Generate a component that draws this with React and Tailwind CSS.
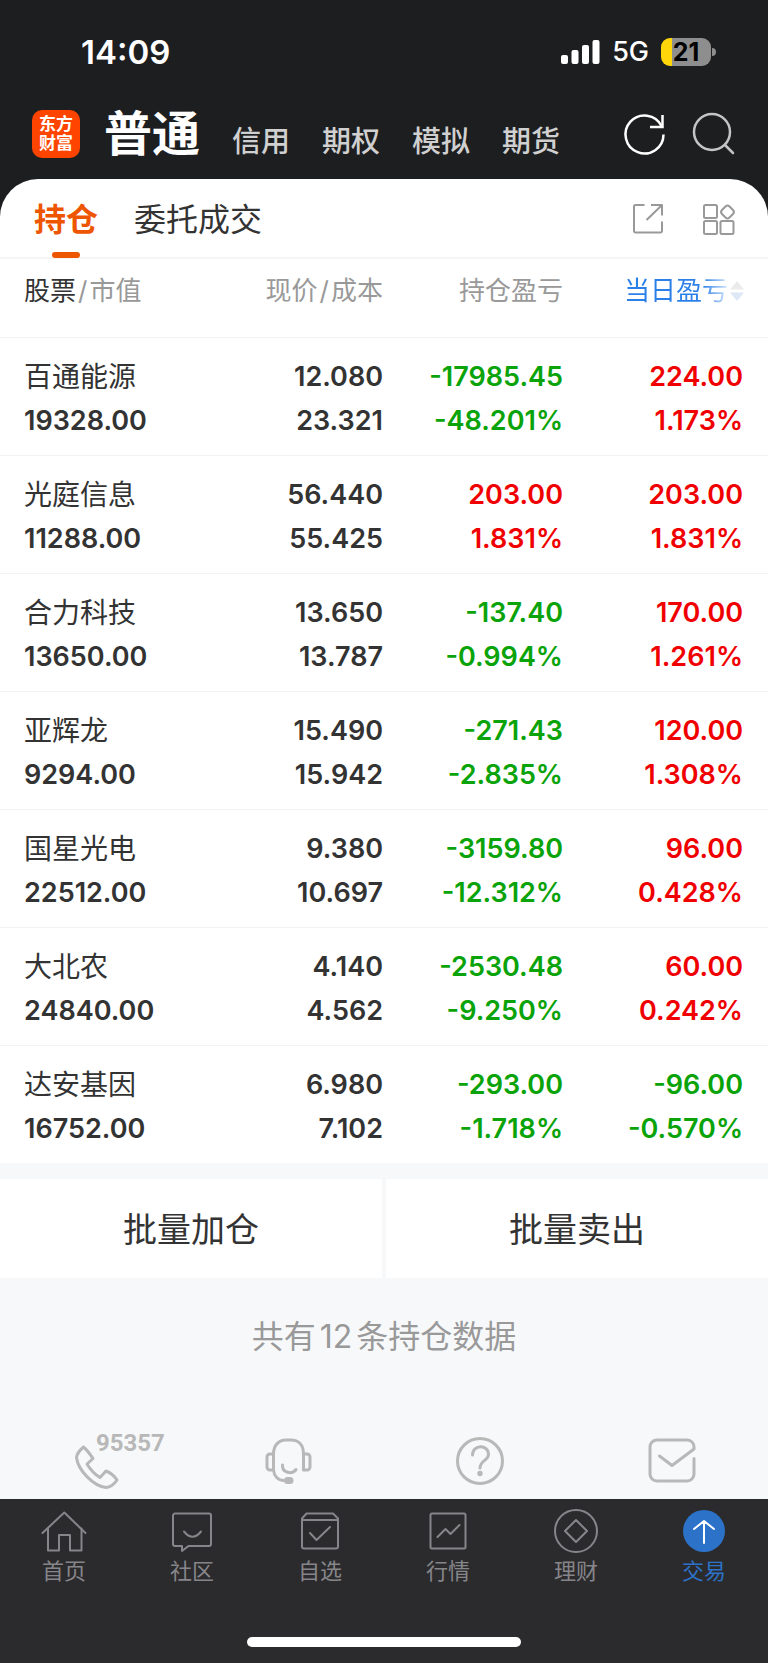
import React from 'react';

const accounts = ['信用', '期权', '模拟', '期货'];

const holdings = [
  { name: '百通能源', value: '19328.00', price: '12.080', cost: '23.321', total: ['-17985.45', '-48.201%'], today: ['224.00', '1.173%'] },
  { name: '光庭信息', value: '11288.00', price: '56.440', cost: '55.425', total: ['203.00', '1.831%'], today: ['203.00', '1.831%'] },
  { name: '合力科技', value: '13650.00', price: '13.650', cost: '13.787', total: ['-137.40', '-0.994%'], today: ['170.00', '1.261%'] },
  { name: '亚辉龙', value: '9294.00', price: '15.490', cost: '15.942', total: ['-271.43', '-2.835%'], today: ['120.00', '1.308%'] },
  { name: '国星光电', value: '22512.00', price: '9.380', cost: '10.697', total: ['-3159.80', '-12.312%'], today: ['96.00', '0.428%'] },
  { name: '大北农', value: '24840.00', price: '4.140', cost: '4.562', total: ['-2530.48', '-9.250%'], today: ['60.00', '0.242%'] },
  { name: '达安基因', value: '16752.00', price: '6.980', cost: '7.102', total: ['-293.00', '-1.718%'], today: ['-96.00', '-0.570%'] },
];

const Icon = ({ size = 44, width = 2, className = '', children }) => (
  <svg
    width={size}
    height={size}
    viewBox={`0 0 ${size} ${size}`}
    fill="none"
    stroke="currentColor"
    strokeWidth={width}
    strokeLinecap="round"
    strokeLinejoin="round"
    aria-hidden="true"
    className={`shrink-0 overflow-visible ${className}`}
  >
    {children}
  </svg>
);

const navItems = [
  {
    label: '首页',
    icon: (
      <>
        <path d="M.5 24 22.3 3.5 43.5 24" />
        <path d="M6 19.5v22h11V26h11v15.5h11.5v-22" />
      </>
    ),
  },
  {
    label: '社区',
    icon: (
      <>
        <path d="M5 4.5h34a2 2 0 0 1 2 2V35a2 2 0 0 1-2 2H18.5l-6.5 5V37H5a2 2 0 0 1-2-2V6.5a2 2 0 0 1 2-2z" />
        <path d="M14 22.5Q22.5 33 31 22.5" />
      </>
    ),
  },
  {
    label: '自选',
    icon: (
      <>
        <path d="M4 9.5 8.5 4.5H35l5 5V37.5a2 2 0 0 1-2 2H6a2 2 0 0 1-2-2z" />
        <path d="M4 11h36M12 24l6.5 7L32 18" />
      </>
    ),
  },
  {
    label: '行情',
    icon: (
      <>
        <rect x="4.5" y="4.5" width="35" height="35" rx="1.5" />
        <path d="m11.5 28 8-8 5 5 9-9" />
      </>
    ),
  },
  {
    label: '理财',
    icon: (
      <>
        <circle cx="22" cy="22" r="21" />
        <path d="m22 11 11 11-11 11-11-11z" />
      </>
    ),
  },
  {
    label: '交易',
    active: true,
    icon: (
      <>
        <circle cx="22" cy="22" r="21" fill="#2b72c8" stroke="none" />
        <path d="M22 34V12M12 20l10-8 10 8" stroke="#fff" />
      </>
    ),
  },
];

const StatusBar = () => (
  <div className="flex items-center justify-between pt-8 pr-[52px] pl-[81px] text-white">
    <span className="text-[33px] leading-[40px] font-semibold">14:09</span>
    <div className="flex items-center">
      <svg width="40" height="24" viewBox="0 0 40 24" fill="#fff" aria-hidden="true">
        <rect x="0" y="15" width="7" height="9" rx="2" />
        <rect x="10.5" y="10" width="7" height="14" rx="2" />
        <rect x="21" y="5" width="7" height="19" rx="2" />
        <rect x="31.5" y="0" width="7" height="24" rx="2" />
      </svg>
      <span className="ml-[11px] text-[27px] leading-8 font-medium">5G</span>
      <div className="ml-3 flex items-center gap-px">
        <div className="flex h-7 w-[50px] items-center justify-center rounded-[9px] bg-linear-to-r from-[#ffd60a] from-22% to-[#8e8e8e] to-22%">
          <span className="text-[25px] leading-7 font-bold text-black">21</span>
        </div>
        <div className="h-2 w-1 rounded-r-full bg-[#8e8e8e]" />
      </div>
    </div>
  </div>
);

const AccountBar = () => (
  <div className="flex items-center pt-[25px] pr-[33px] pb-2 pl-8">
    <div className="flex size-12 shrink-0 flex-col items-center justify-center rounded-[10px] bg-[#ff4400] text-[17px] leading-[19px] font-bold text-white">
      <span>东方</span>
      <span>财富</span>
    </div>
    <nav className="ml-6 flex items-end gap-8">
      <a href="#normal" className="text-[48px] leading-[74px] font-bold text-white">普通</a>
      {accounts.map((name) => (
        <a key={name} href="#account" className="text-[29px] leading-[58px] font-medium text-[#d0d0d0]">
          {name}
        </a>
      ))}
    </nav>
    <div className="ml-auto flex gap-6">
      <button type="button" aria-label="刷新" className="text-white">
        <Icon width={2.5} className="[stroke-linecap:butt] [stroke-linejoin:miter]">
          <path d="M40.5 22.5A19 19 0 1 1 38.5 14" />
          <path d="M27 15h12.5V3" />
        </Icon>
      </button>
      <button type="button" aria-label="搜索" className="text-[#c4c4c4]">
        <Icon width={2.5}>
          <circle cx="21" cy="20" r="18" />
          <path d="m34 33 8 8" />
        </Icon>
      </button>
    </div>
  </div>
);

const TabBar = () => (
  <div className="flex h-20 items-center border-b-2 border-[#f5f5f5] px-[34px]">
    <div className="flex h-full gap-9">
      <button type="button" className="relative pt-1 text-[32px] leading-10 font-bold text-[#ee5500]">
        持仓
        <span className="absolute -bottom-px left-1/2 h-1.5 w-7 -translate-x-1/2 rounded-sm bg-[#ee5500]" />
      </button>
      <button type="button" className="pt-1 text-[32px] leading-10 text-[#333]">委托成交</button>
    </div>
    <div className="ml-auto flex gap-[38px] pt-0.5 text-[#999]">
      <button type="button" aria-label="分享">
        <Icon size={32} className="[stroke-linecap:butt]">
          <path d="M12.5 2h-9A1.5 1.5 0 0 0 2 3.5V28a1.5 1.5 0 0 0 1.5 1.5h25A1.5 1.5 0 0 0 30 28v-9.5" />
          <path d="M19 2h11v10.5M14.5 17l15-14.5" />
        </Icon>
      </button>
      <button type="button" aria-label="更多功能">
        <Icon size={32}>
          <rect x="2" y="2" width="13" height="13" rx="1.5" />
          <rect x="2" y="18" width="13" height="13" rx="1.5" />
          <rect x="18.5" y="18" width="13" height="13" rx="1.5" />
          <path d="M23.5 3.5q2-2 4 0L31 7q2 2 0 4l-3.5 3.5q-2 2-4 0L20 11q-2-2 0-4z" />
        </Icon>
      </button>
    </div>
  </div>
);

const gainColor = (text) => (text.startsWith('-') ? 'text-[#0aa30a]' : 'text-[#f00000]');

const HoldingsTable = () => (
  <table className="w-full table-fixed border-separate border-spacing-0">
    <colgroup>
      <col />
      <col className="w-[168px]" />
      <col className="w-[180px]" />
      <col className="w-[205px]" />
    </colgroup>
    <thead>
      <tr className="h-[78px] align-top text-[26px] leading-8 text-[#999] *:pt-4 *:font-normal">
        <th scope="col" className="pl-6 text-left">
          <span className="text-[#333]">股票</span>
          <span className="mx-0.5">/</span>市值
        </th>
        <th scope="col" className="text-right whitespace-nowrap">
          现价<span className="mx-0.5">/</span>成本
        </th>
        <th scope="col" className="text-right">持仓盈亏</th>
        <th scope="col" className="pr-6">
          <button type="button" className="ml-auto flex items-center gap-0.5">
            <span className="bg-linear-to-r from-[#2a7fe8] from-75% to-[#2a7fe8]/20 bg-clip-text text-transparent">当日盈亏</span>
            <svg width="14" height="20" viewBox="0 0 14 20" aria-hidden="true">
              <path d="M7 0l7 8.5H0z" fill="#ebebeb" />
              <path d="M7 20l7-8.5H0z" fill="#dce8f6" />
            </svg>
          </button>
        </th>
      </tr>
    </thead>
    <tbody>
      {holdings.map((row) => (
        <tr key={row.name} className="h-[118px] text-right align-top text-[27px] leading-[44px] font-semibold text-[#333] *:border-t *:border-[#f3f3f3] *:pt-[17px]">
          <td className="pl-6 text-left">
            <div className="text-[28px] font-normal">{row.name}</div>
            <div>{row.value}</div>
          </td>
          <td>
            <div>{row.price}</div>
            <div>{row.cost}</div>
          </td>
          <td className={gainColor(row.total[0])}>
            <div>{row.total[0]}</div>
            <div>{row.total[1]}</div>
          </td>
          <td className={`pr-[25px] ${gainColor(row.today[0])}`}>
            <div>{row.today[0]}</div>
            <div>{row.today[1]}</div>
          </td>
        </tr>
      ))}
    </tbody>
  </table>
);

const HelpLinks = () => (
  <div className="grid grid-cols-4 justify-items-center pb-[14px] text-[#b8b8b8]">
    <a href="tel:95357" className="relative">
      <Icon size={48} width={3}>
        <path d="M11.5 10C8 13 5 16.5 4.5 20.5C6 33 21 49 34 50.5C39 50 43 46 45 43C42 38.5 38 35.5 34 34L28 40.5C22 37 18 32 15 27L21 21.5C18 17 15 13 11.5 10z" />
      </Icon>
      <span className="absolute -top-1.5 left-6 font-[Roboto] text-[24px] leading-6 font-bold">95357</span>
    </a>
    <a href="#service" aria-label="在线客服">
      <Icon size={48} width={3}>
        <path d="M9.5 32V17C9.5 8 15 3 22 3h5c7.5 0 12.5 5 12.5 14v16H43a3 3 0 0 0 3-3V20a3 3 0 0 0-3-3h-3.5" />
        <path d="M9.5 17H6a3 3 0 0 0-3 3v10a3 3 0 0 0 3 3h3.5C10 39 14 43.5 20 43.5" />
        <path d="M18.5 28C18 36 28 38 32 32.5" />
        <rect x="21.5" y="41.5" width="6.5" height="4" rx="2" fill="currentColor" />
      </Icon>
    </a>
    <a href="#help" aria-label="帮助">
      <Icon size={48} width={3}>
        <circle cx="24" cy="24" r="22.5" />
        <path d="M16.5 18C16.5 7 32.5 7 32.5 17.5C32.5 23.5 24 23.5 24 31" />
        <circle cx="24" cy="36.5" r="1.2" fill="currentColor" />
      </Icon>
    </a>
    <a href="#feedback" aria-label="反馈">
      <Icon size={48} width={3}>
        <path d="M46 21.5V37a7 7 0 0 1-7 7H9a7 7 0 0 1-7-7V10a7 7 0 0 1 7-7h29.5C43 3 46 6 46 10v2L24 28.5 11.5 19" />
      </Icon>
    </a>
  </div>
);

const BottomNav = () => (
  <div className="bg-[#2b2b2d] pt-[10px] pb-[17px]">
    <nav className="grid grid-cols-6">
      {navItems.map((item) => (
        <a
          key={item.label}
          href="#nav"
          className={`flex flex-col items-center gap-[7px] text-[22px] leading-[22px] ${item.active ? 'text-[#2b72c8]' : 'text-[#86868a]'}`}
        >
          <Icon>{item.icon}</Icon>
          {item.label}
        </a>
      ))}
    </nav>
    <div className="mx-auto mt-[55px] h-[10px] w-[274px] rounded-full bg-white" />
  </div>
);

export default function App() {
  return (
    <div className="flex min-h-screen flex-col bg-[#f7f8fa] font-['Inter','Noto_Sans_CJK_SC',sans-serif]">
      <div className="bg-[#1d1e20]">
        <StatusBar />
        <AccountBar />
        <main className="rounded-t-[38px] bg-white">
          <TabBar />
          <HoldingsTable />
        </main>
      </div>
      <div className="mt-4 grid grid-cols-2 gap-1 text-[34px] text-[#333]">
        <button type="button" className="h-[99px] bg-white pt-0.5">批量加仓</button>
        <button type="button" className="h-[99px] bg-white pt-0.5">批量卖出</button>
      </div>
      <p className="pt-[39px] pb-20 text-center text-[32px] leading-10 text-[#999]">
        共有<span className="mx-1">12</span>条持仓数据
      </p>
      <HelpLinks />
      <div className="mt-auto">
        <BottomNav />
      </div>
    </div>
  );
}
